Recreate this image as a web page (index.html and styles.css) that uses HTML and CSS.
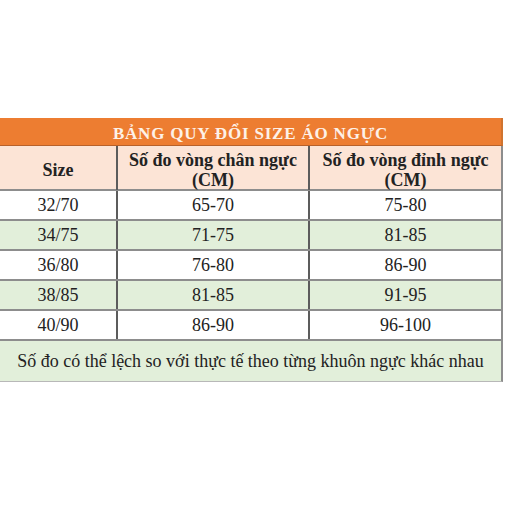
FILE: index.html
```html
<!DOCTYPE html>
<html lang="vi">
<head>
<meta charset="utf-8">
<title>Bảng quy đổi size áo ngực</title>
<link rel="stylesheet" href="styles.css">
</head>
<body>
<div class="sheet">
  <div class="title">BẢNG QUY ĐỔI SIZE ÁO NGỰC</div>
  <div class="row head">
    <div class="cell">Size</div>
    <div class="cell">Số đo vòng chân ngực<br>(CM)</div>
    <div class="cell last">Số đo vòng đỉnh ngực<br>(CM)</div>
  </div>
  <div class="row">
    <div class="cell">32/70</div>
    <div class="cell">65-70</div>
    <div class="cell last">75-80</div>
  </div>
  <div class="row green">
    <div class="cell">34/75</div>
    <div class="cell">71-75</div>
    <div class="cell last">81-85</div>
  </div>
  <div class="row">
    <div class="cell">36/80</div>
    <div class="cell">76-80</div>
    <div class="cell last">86-90</div>
  </div>
  <div class="row green">
    <div class="cell">38/85</div>
    <div class="cell">81-85</div>
    <div class="cell last">91-95</div>
  </div>
  <div class="row">
    <div class="cell">40/90</div>
    <div class="cell">86-90</div>
    <div class="cell last">96-100</div>
  </div>
  <div class="note">Số đo có thể lệch so với thực tế theo từng khuôn ngực khác nhau</div>
</div>
</body>
</html>
```

FILE: styles.css
```css
html, body {
  margin: 0;
  padding: 0;
  background: #ffffff;
}

body {
  font-family: "Liberation Serif", Tinos, "DejaVu Serif", serif;
  color: #222222;
}

.sheet {
  margin-top: 118px;
  width: 503px;
}

.title {
  box-sizing: border-box;
  height: 28px;
  padding-top: 5px;
  background: #ed7d31;
  border-bottom: 1px solid #b8612a;
  border-right: 2px solid #d0742f;
  color: #fdf1e8;
  font-weight: bold;
  font-size: 17px;
  letter-spacing: 0.8px;
  line-height: 22px;
  text-align: center;
  overflow: hidden;
}

.row {
  display: grid;
  grid-template-columns: 118px 192px 193px;
  height: 30px;
  box-sizing: border-box;
  border-bottom: 2px solid #8d8d8d;
  background: #ffffff;
}

.row.green {
  background: #e2efda;
}

.row.head {
  height: 45px;
  background: #fce4d6;
  font-weight: bold;
}

.cell {
  box-sizing: border-box;
  border-right: 2px solid #5c5c5c;
  display: flex;
  align-items: center;
  justify-content: center;
  text-align: center;
  font-size: 18px;
  line-height: 20px;
}

.head .cell {
  line-height: 20px;
  padding-top: 4px;
}

.cell.last {
  border-right-color: #8d8d8d;
}

.note {
  box-sizing: border-box;
  height: 41px;
  background: #e2efda;
  border-right: 2px solid #8d8d8d;
  border-bottom: 1px solid #b8b8b8;
  font-size: 18px;
  line-height: 40px;
  text-align: center;
}
```
